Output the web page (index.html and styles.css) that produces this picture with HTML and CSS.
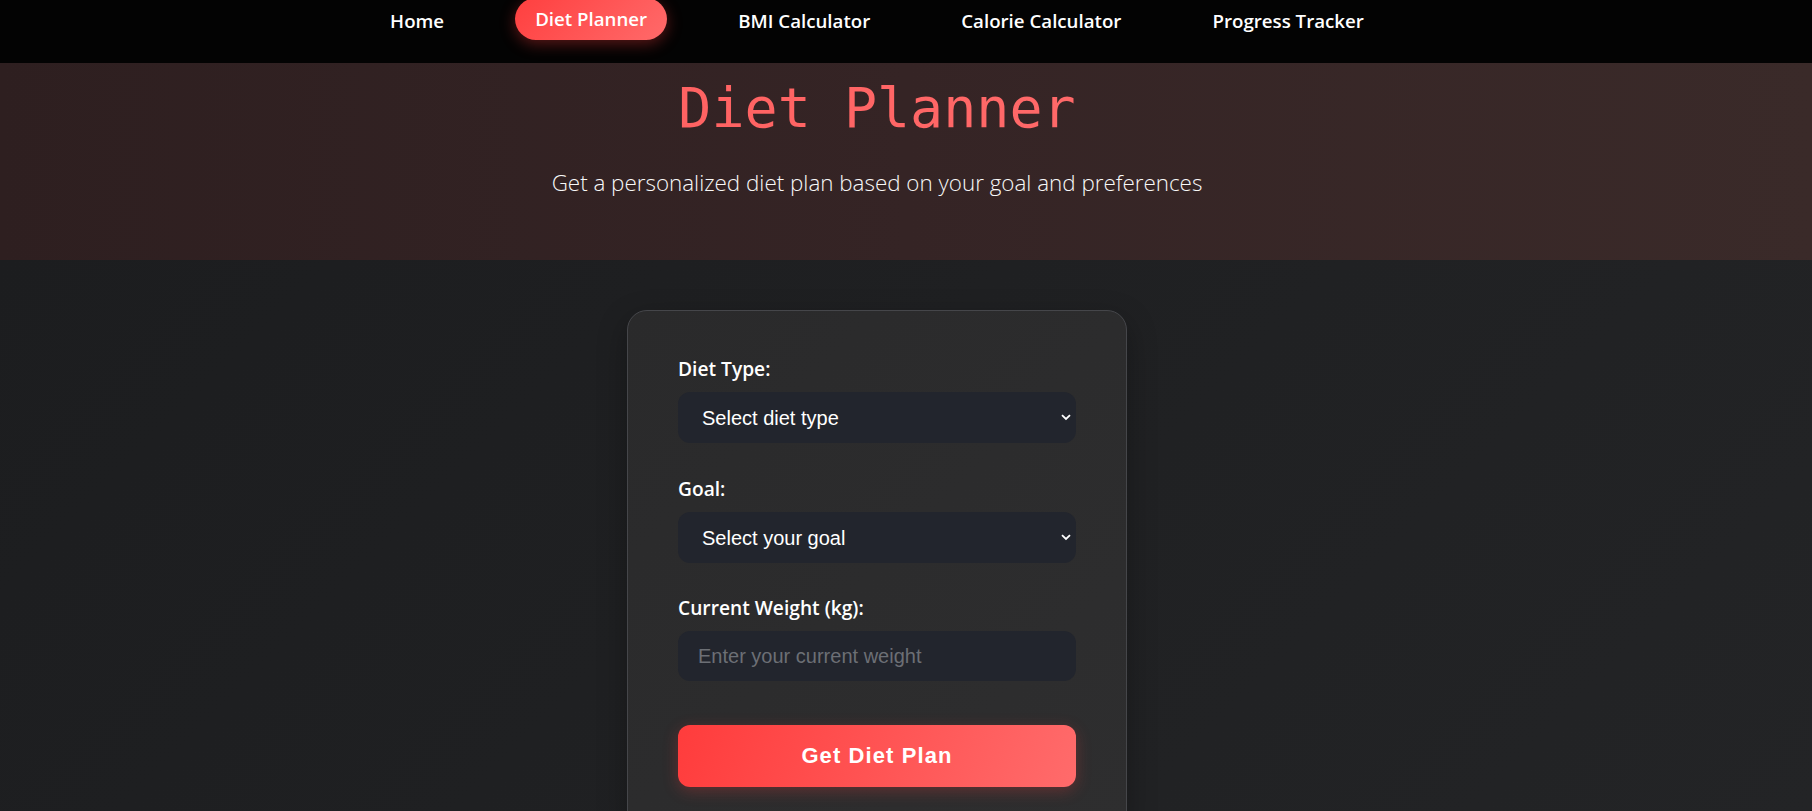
FILE: index.html
```html
<!DOCTYPE html>
<html lang="en">
<head>
<meta charset="utf-8">
<title>Diet Planner</title>
<link rel="stylesheet" href="styles.css">
</head>
<body>
<nav class="topnav">
  <ul class="nav-list">
    <li><a class="nav-link" href="#">Home</a></li>
    <li><a class="nav-link active" href="#">Diet Planner</a></li>
    <li><a class="nav-link" href="#">BMI Calculator</a></li>
    <li><a class="nav-link" href="#">Calorie Calculator</a></li>
    <li><a class="nav-link" href="#">Progress Tracker</a></li>
  </ul>
</nav>
<header class="hero">
  <div class="hero-inner">
    <h1 class="hero-title">Diet Planner</h1>
    <p class="hero-sub">Get a personalized diet plan based on your goal and preferences</p>
  </div>
</header>
<main class="main">
  <div class="main-inner">
    <form class="card">
      <div class="group">
        <label class="label" for="diet">Diet Type:</label>
        <div class="select-wrap">
          <select id="diet" class="control select">
            <option>Select diet type</option>
          </select>
          <svg class="chev" width="10" height="7" viewBox="0 0 10 7"><path d="M1 1.2 L5 5 L9 1.2" fill="none" stroke="#fff" stroke-width="1.8"/></svg>
        </div>
      </div>
      <div class="group">
        <label class="label" for="goal">Goal:</label>
        <div class="select-wrap">
          <select id="goal" class="control select">
            <option>Select your goal</option>
          </select>
          <svg class="chev" width="10" height="7" viewBox="0 0 10 7"><path d="M1 1.2 L5 5 L9 1.2" fill="none" stroke="#fff" stroke-width="1.8"/></svg>
        </div>
      </div>
      <div class="group">
        <label class="label" for="weight">Current Weight (kg):</label>
        <input id="weight" class="control input" type="text" placeholder="Enter your current weight">
      </div>
      <button type="button" class="btn">Get Diet Plan</button>
    </form>
  </div>
</main>
</body>
</html>
```
FILE: styles.css
```css
* { box-sizing: border-box; }
html, body { margin: 0; padding: 0; }
body {
  height: 811px;
  overflow: hidden;
  background: #1e1f21;
  font-family: "Open Sans", "Noto Sans", sans-serif;
  color: #fff;
}
.topnav {
  background: #030303;
  height: 63px;
  padding-top: 0;
  padding-right: 58px;
}
.nav-list {
  list-style: none;
  margin: 0;
  padding: 0;
  display: flex;
  justify-content: center;
  gap: 51px;
}
.nav-link {
  display: block;
  padding: 10px 20px;
  line-height: 22px;
  font-size: 18.7px;
  font-weight: 600;
  color: #fff;
  text-decoration: none;
  border-radius: 25px;
}
.nav-link.active {
  background: linear-gradient(135deg, #ff3f3f, #ff6a6a);
  transform: translateY(-2px);
  box-shadow: 0 4px 15px rgba(255, 60, 60, 0.35);
}
.hero {
  height: 197px;
  background: linear-gradient(90deg, #2e1f20 0%, #352425 50%, #3a2a29 100%);
  padding-right: 58px;
}
.hero-inner {
  text-align: center;
  padding-top: 12px;
}
.hero-title {
  margin: 0;
  font-family: "DejaVu Sans Mono", monospace;
  font-weight: 400;
  font-size: 55px;
  line-height: 66px;
  background: linear-gradient(90deg, #ff5757, #ff7474);
  -webkit-background-clip: text;
  background-clip: text;
  color: transparent;
}
.hero-sub {
  margin: 27px 0 0;
  font-size: 22.4px;
  line-height: 30px;
  font-weight: 300;
  color: #f8f8f8;
}
.main {
  height: 551px;
  background: linear-gradient(135deg, #1c1d1f, #232426);
  padding-right: 58px;
}
.main-inner {
  display: flex;
  justify-content: center;
  padding-top: 50px;
}
.card {
  width: 500px;
  height: 520px;
  padding: 45px 50px;
  background: linear-gradient(135deg, #2a2a2b, #2e2e2f);
  border: 1px solid #45464a;
  border-radius: 20px;
  box-shadow: 0 10px 30px rgba(0, 0, 0, 0.3);
}
.group { margin-bottom: 33px; }
.group:nth-child(2) { margin-bottom: 32px; }
.label {
  display: block;
  font-size: 19.2px;
  font-weight: 600;
  line-height: 26px;
  margin-bottom: 10px;
  color: #fff;
}
.select-wrap { position: relative; }
.control {
  display: block;
  width: 100%;
  border: none;
  outline: none;
  border-radius: 12px;
  background: #22252d;
  color: #fff;
  font-family: "Liberation Sans", Arial, sans-serif;
  font-size: 20px;
}
.select {
  appearance: none;
  -webkit-appearance: none;
  height: 51px;
  padding: 0 36px 0 24px;
}
.input {
  height: 50px;
  padding: 0 20px;
}
.input::placeholder { color: #6c6f75; }
.chev {
  position: absolute;
  right: 5px;
  top: 22px;
}
.btn {
  display: block;
  width: 100%;
  height: 62px;
  margin-top: 44px;
  border: none;
  border-radius: 12px;
  background: linear-gradient(110deg, #ff3c3c, #ff6b6b);
  color: #fff;
  font-family: "Liberation Sans", Arial, sans-serif;
  font-weight: 700;
  font-size: 22px;
  letter-spacing: 1.1px;
  box-shadow: 0 4px 15px rgba(255, 60, 60, 0.25);
}
```
